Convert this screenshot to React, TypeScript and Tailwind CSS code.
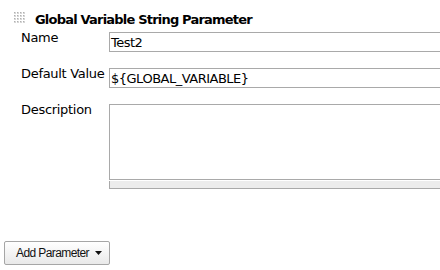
const Grip = () => (
  <svg width="12" height="12" viewBox="0 0 12 12" className="shrink-0">
    {[0, 3, 6, 9].map((y) =>
      [0, 3, 6, 9].map((x) => (
        <g key={`${x}-${y}`}>
          <rect x={x} y={y} width="2" height="2" fill="#d6d6d6" />
          <rect x={x} y={y} width="1" height="1" fill="#b0b0b0" />
        </g>
      ))
    )}
  </svg>
);

const Field = ({ value }: { value: string }) => (
  <div className="mt-[2px] h-[20px] w-[380px] border border-[#a9a9a9] pl-[1px] pt-[2px] leading-[16px] tracking-[-0.5px] whitespace-nowrap">
    {value}
  </div>
);

const App = () => {
  return (
    <div className="w-[440px] h-[270px] overflow-hidden bg-white text-black font-['DejaVu_Sans',Verdana,sans-serif] text-[13px] leading-[16px] tracking-[-0.3px]">
      {/* section header */}
      <div className="flex items-start pl-[14px] pt-[12px] h-[28px]">
        <Grip />
        <span className="ml-[9px] font-bold tracking-[-0.8px]">
          Global Variable String Parameter
        </span>
      </div>

      <div className="mt-[2px] grid grid-cols-[88px_380px] gap-y-[14px] pl-[21px]">
        <div>Name</div>
        <Field value="Test2" />

        <div>Default Value</div>
        <Field value="${GLOBAL_VARIABLE}" />

        <div>Description</div>
        <div className="mt-[2px] flex flex-col">
          <div className="h-[76px] border border-[#a9a9a9]" />
          <div className="mt-[1px] h-[8px] border-l border-b border-[#a9a9a9] bg-[#ececec]" />
        </div>
      </div>

      <div className="mt-[52px] pl-[4px]">
        <button className="flex h-[24px] w-[106px] items-center rounded-[2px] border border-[#a6a6a6] bg-gradient-to-b from-white to-[#e9e9e9] pl-[11px] font-['Liberation_Sans',Arial,sans-serif] text-[12px] tracking-[-0.6px] text-[#111]">
          Add Parameter
          <svg width="7" height="4" viewBox="0 0 7 4" className="ml-[6px]">
            <path d="M0 0h7L3.5 4z" fill="#111" />
          </svg>
        </button>
      </div>
    </div>
  );
};

export default App;
